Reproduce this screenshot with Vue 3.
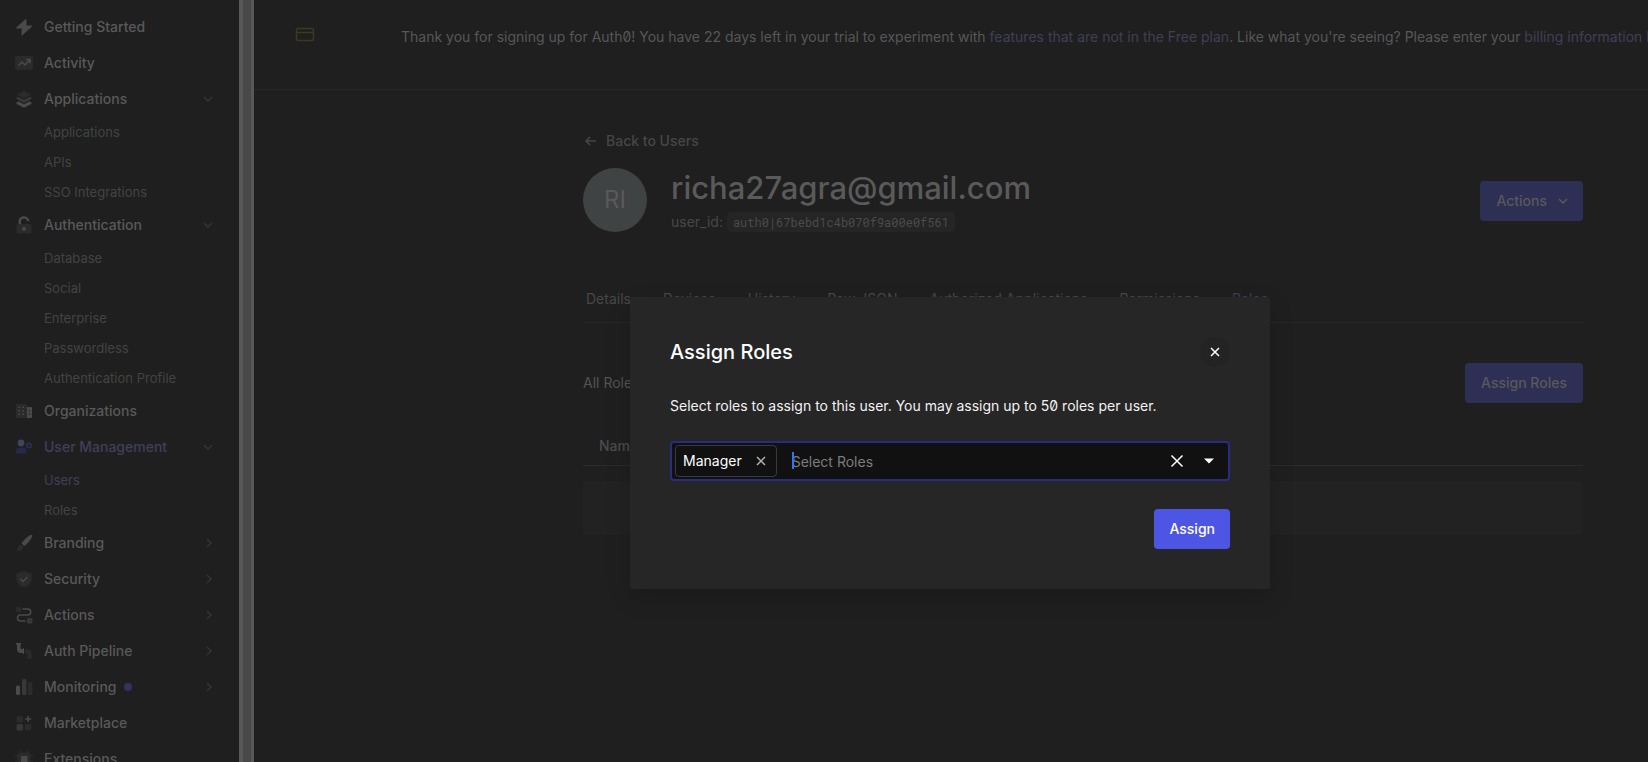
<script setup>
import { ref } from 'vue'

const nav = [
  { label: 'Getting Started', icon: 'bolt' },
  { label: 'Activity', icon: 'activity' },
  { label: 'Applications', icon: 'layers', open: true, children: [{ label: 'Applications' }, { label: 'APIs' }, { label: 'SSO Integrations' }] },
  { label: 'Authentication', icon: 'lock', open: true, children: [{ label: 'Database' }, { label: 'Social' }, { label: 'Enterprise' }, { label: 'Passwordless' }, { label: 'Authentication Profile' }] },
  { label: 'Organizations', icon: 'building' },
  { label: 'User Management', icon: 'users', open: true, active: true, children: [{ label: 'Users', active: true }, { label: 'Roles' }] },
  { label: 'Branding', icon: 'brush', closed: true },
  { label: 'Security', icon: 'shield', closed: true },
  { label: 'Actions', icon: 'flow', closed: true },
  { label: 'Auth Pipeline', icon: 'pipe', closed: true },
  { label: 'Monitoring', icon: 'bars', closed: true, dot: true },
  { label: 'Marketplace', icon: 'market' },
  { label: 'Extensions', icon: 'chip' }
]
const tabs = ['Details', 'Devices', 'History', 'Raw JSON', 'Authorized Applications', 'Permissions', 'Roles']
const query = ref('')
</script>

<template>
  <div class="shell">
    <nav class="sidebar" aria-label="Main">
      <template v-for="item in nav" :key="item.label">
        <a href="#" class="nav-row" :class="{ active: item.active }">
          <svg class="nav-icon" viewBox="0 0 18 18" width="18" height="18" aria-hidden="true">
            <path v-if="item.icon === 'bolt'" class="lt" d="M10.400 1.200 1.300 9.400c-.5.5-.3 1.200.4 1.200h5L6.400 16.900c0 .6.6.7 1 .3l9.300-8.400c.5-.5.3-1.200-.4-1.200h-4.800l-.100-6.100c0-.6-.6-.7-1-.3z" />
            <g v-else-if="item.icon === 'activity'">
              <rect class="dk" x="0" y="2" width="18" height="14" rx="1.500" />
              <path class="ln" d="M3.500 11.500 7 8l3 3 4.500-5M11 5.500h4v4" />
            </g>
            <g v-else-if="item.icon === 'layers'">
              <path class="dk" d="M9 1 1.500 4.500 9 8.200l7.500-3.700z" />
              <path class="md" d="m1.500 7.500 1.500-.7 6 3 6-3 1.500.7v1.500L9 13l-7.500-4z" />
              <path class="lt" d="m1.500 12.500 2-1.200L9 14.200l5.500-2.900 2 1.200V14L9 17.700 1.500 14z" />
            </g>
            <g v-else-if="item.icon === 'lock'">
              <rect class="dk" x="1.500" y="8" width="15" height="9.500" rx="1.500" />
              <path class="ln thick" d="M4.800 8V6a4.200 4.200 0 0 1 8.400-.800" />
              <circle class="lt" cx="9" cy="12.700" r="2" />
            </g>
            <g v-else-if="item.icon === 'building'">
              <rect class="dk" x="1" y="2" width="11" height="14" rx="1" />
              <path class="lt" d="M12 5h4q1 0 1 1v9q0 1-1 1h-4z" />
              <path class="lt" d="M3.500 4.500H5V6H3.500zm4 0H9V6H7.500zm-4 3.500H5v1.500H3.500zm4 0H9v1.500H7.500zm-4 3.500H5V13H3.500zm4 0H9V13H7.500z" />
              <path class="dk" d="M13.700 8h1.500v1.500h-1.500zm0 3.500h1.500V13h-1.500z" />
            </g>
            <g v-else-if="item.icon === 'users'">
              <circle class="u-lt" cx="6" cy="5" r="3.400" />
              <path class="u-dk" d="M1 15.500v-2Q1 9.800 5 9.800h3q3.500 0 3.500 3.700v2z" />
              <circle class="u-ring" cx="14" cy="7.500" r="2" />
              <path class="u-ring" d="M14 4.300v1m0 4.400v1m-3-4.800 1 .6m4 2.200 1 .6m-6 0 1-.6m4-2.200 1-.6" />
            </g>
            <g v-else-if="item.icon === 'brush'">
              <path class="lt" d="M17 1c.6.600.3 1.700-.5 2.900-2 3-5 6.700-7.300 8.100L6.500 9.300C8 7 12 3 14.500 1.500c1.200-.7 2-.9 2.500-.5z" />
              <path class="dk" d="M5.500 10.500q3 .5 2.800 3.200C7.500 17 3.500 17.300 1 17q1.800-1 1.800-3.300.2-2.700 2.700-3.200z" />
            </g>
            <g v-else-if="item.icon === 'shield'">
              <path class="dk" d="M9 .8q3.500 2.400 7.500 2.400v6Q16 14.500 9 17.500 2 14.500 1.500 9.200v-6Q5.500 3.200 9 .8z" />
              <path class="ln" d="m5.500 9 2.500 2.500 4.500-4.500" />
            </g>
            <g v-else-if="item.icon === 'flow'">
              <rect class="dk" x="1" y="1" width="5" height="5" rx="1" />
              <path class="ln" d="M7.500 3h5.200a3 3 0 0 1 0 6H5.500a3 3 0 0 0 0 6h5" />
              <rect class="md" x="12" y="12" width="5.500" height="5.500" rx="1" />
            </g>
            <g v-else-if="item.icon === 'pipe'">
              <path class="lt" d="M1 1h5v1.500h-.5V6q0 1 1 1H8V6h1v6H8v-1H6Q2 11 2 7V2.500H1z" />
              <path class="dk" d="M10 7.500h2.500q4 0 4 4V15h.5v1.500h-5V15h.500v-2.500q0-1-1-1H10z" />
            </g>
            <g v-else-if="item.icon === 'bars'">
              <rect class="lt" x="1" y="7.500" width="4" height="9.500" rx="1.500" />
              <rect class="md" x="7" y="1" width="4.500" height="16" rx="1.500" />
              <rect class="dk" x="13" y="4" width="4.500" height="13" rx="1.500" />
            </g>
            <g v-else-if="item.icon === 'market'">
              <rect class="dk" x="1.500" y="2" width="6.500" height="6.500" rx="1.500" />
              <rect class="md" x="1.500" y="10" width="6.500" height="6.500" rx="1.500" />
              <rect class="dk" x="10" y="10" width="6.500" height="6.500" rx="1.500" />
              <path class="ln" d="M13.200 2v6m-3-3h6" />
            </g>
            <g v-else>
              <path class="chip-pins" d="M6 0v18M12 0v18M0 6h18M0 12h18" />
              <rect class="dk" x="2.500" y="2.500" width="13" height="13" rx="2" />
              <rect class="lt" x="6" y="6" width="6.500" height="6.500" rx="1" />
            </g>
          </svg>
          <span>{{ item.label }}</span>
          <i v-if="item.dot" class="dot"></i>
          <svg v-if="item.open" class="chev" viewBox="0 0 12 12" width="12" height="12" aria-hidden="true"><path d="m2 4 4 4 4-4" /></svg>
          <svg v-if="item.closed" class="chev" viewBox="0 0 12 12" width="12" height="12" aria-hidden="true"><path d="m5 2 4 4-4 4" /></svg>
        </a>
        <a v-for="child in item.children" :key="child.label" href="#" class="sub-row" :class="{ active: child.active }">{{ child.label }}</a>
      </template>
    </nav>
    <div class="gutter"></div>

    <main class="main">
      <div class="page">
        <div class="banner">
          <svg viewBox="0 0 20 16" width="20" height="16" aria-hidden="true"><rect x="1.500" y="1.500" width="17" height="12" rx="1.500" /><path d="M1.500 5.500h17" /></svg>
          <p>Thank you for signing up for Auth0! You have 22 days left in your trial to experiment with <a href="#">features that are not in the Free plan</a>. Like what you're seeing? Please enter your <a href="#">billing information here</a></p>
        </div>

        <div class="content">
          <a href="#" class="back">
            <svg viewBox="0 0 16 16" width="16" height="16" aria-hidden="true"><path d="M13 8H3m4-4L3 8l4 4" /></svg>
            Back to Users
          </a>
          <header class="profile">
            <div class="avatar">RI</div>
            <div class="identity">
              <h1>richa27agra@gmail.com</h1>
              <p>user_id: <code>auth0|67bebd1c4b070f9a00e0f561</code></p>
            </div>
            <button class="btn muted menu" type="button">Actions
              <svg viewBox="0 0 12 12" width="12" height="12" aria-hidden="true"><path d="m2 4 4 4 4-4" /></svg>
            </button>
          </header>
          <div class="tabs">
            <a v-for="t in tabs" :key="t" href="#" :class="{ active: t === 'Roles' }">{{ t }}</a>
          </div>
          <div class="roles-bar">
            <p>All Roles assigned to this User.</p>
            <button class="btn muted" type="button">Assign Roles</button>
          </div>
          <table class="roles">
            <thead><tr><th>Name</th><th>Description</th></tr></thead>
          </table>
          <div class="empty"></div>
        </div>
      </div>

      <div class="overlay">
        <section class="modal" role="dialog" aria-modal="true" aria-labelledby="dlg-title">
          <header>
            <h2 id="dlg-title">Assign Roles</h2>
            <button class="close" type="button" aria-label="Close">
              <svg viewBox="0 0 12 12" width="12" height="12" aria-hidden="true"><path d="m2 2 8 8m0-8-8 8" /></svg>
            </button>
          </header>
          <label for="roles-input">Select roles to assign to this user. You may assign up to 50 roles per user.</label>
          <div class="picker">
            <span class="tag">Manager
              <button type="button" aria-label="Remove Manager"><svg viewBox="0 0 12 12" width="12" height="12" aria-hidden="true"><path d="m2 2 8 8m0-8-8 8" /></svg></button>
            </span>
            <span class="field"><input id="roles-input" v-model="query" type="text" placeholder="Select Roles" /></span>
            <button class="clear" type="button" aria-label="Clear all"><svg viewBox="0 0 14 14" width="14" height="14" aria-hidden="true"><path d="m1.500 1.500 11 11m0-11-11 11" /></svg></button>
            <button class="toggle" type="button" aria-label="Show roles"><svg viewBox="0 0 10 6" width="10" height="6" aria-hidden="true"><path d="M0 .5h10l-5 5z" /></svg></button>
          </div>
          <footer><button class="btn primary" type="button">Assign</button></footer>
        </section>
      </div>
    </main>
  </div>
</template>

<style>
html, body { background: #1f1f1f; }
</style>

<style scoped>
.shell {
  display: flex;
  height: 100vh;
  overflow: hidden;
  background: #1f1f1f;
  color: #535353;
  font-family: Inter, "Liberation Sans", sans-serif;
  font-feature-settings: "zero";
  font-size: 14px;
  line-height: 20px;
}
.shell * { box-sizing: border-box; }
a { color: inherit; text-decoration: none; }
p, h1, h2 { margin: 0; }
button { font: inherit; color: inherit; border: 0; padding: 0; background: none; cursor: pointer; }
svg { display: block; flex: none; }

.sidebar { flex: 0 0 239px; padding: 9px 25px 0 15px; overflow: hidden; }
.nav-row { display: flex; align-items: center; height: 36px; font-weight: 500; color: #595959; white-space: nowrap; }
.nav-icon { margin-right: 11px; }
.nav-row.active, .sub-row.active { color: #3f3f57; }
.chev { margin-left: auto; fill: none; stroke: #363636; stroke-width: 1.300; }
.sub-row { display: flex; align-items: center; height: 30px; padding-left: 29px; font-size: 13px; color: #434343; white-space: nowrap; }
.dot { width: 8px; height: 8px; margin-left: 8px; border-radius: 50%; background: #313361; }
.lt { fill: #4a4a4a; }
.md { fill: #383838; }
.dk { fill: #2b2b2b; }
.ln { fill: none; stroke: #4a4a4a; stroke-width: 1.500; }
.ln.thick { stroke-width: 2.500; }
.chip-pins { fill: none; stroke: #2b2b2b; stroke-width: 1.500; }
.u-lt { fill: #42425f; }
.u-dk { fill: #27284a; }
.u-ring { fill: none; stroke: #2d2e55; stroke-width: 1.500; }

.gutter { flex: 0 0 15px; background: #494949; border: solid #585858; border-width: 0 3px 0 4px; }

.main { position: relative; flex: 1; min-width: 0; overflow: hidden; }
/* the banner keeps its text on one line, so the page is wider than its viewport */
.page { min-width: 1658px; }
.banner { display: flex; align-items: flex-start; gap: 86px; padding: 27px 41px 42px; border-bottom: 1px solid #282828; white-space: nowrap; color: #575757; }
.banner svg { fill: none; stroke: #3e3722; stroke-width: 1.500; }
.banner a { color: #3f3f57; }

.content { max-width: 1000px; margin: 0 auto; padding-top: 41px; }
.back { display: inline-flex; align-items: center; gap: 7px; font-weight: 500; color: #464646; height: 20px; vertical-align: top; }
.back svg, .btn svg { fill: none; stroke: currentColor; stroke-width: 1.500; }
.profile { display: flex; align-items: center; margin-top: 17px; }
.avatar { display: grid; place-items: center; width: 64px; height: 64px; margin-right: 24px; border-radius: 50%; background: #3f4343; color: #595959; font-size: 24px; }
.identity { flex: 1; }
h1 { font-size: 31px; line-height: 40px; font-weight: 500; color: #5a5a5a; }
.identity p { margin-top: 4px; color: #484848; }
code { display: inline-block; padding: 0 6px; border-radius: 4px; background: #252525; color: #4b4b4b; font: 12px/20px "Roboto Mono", "DejaVu Sans Mono", monospace; vertical-align: top; }
.btn { display: inline-flex; align-items: center; gap: 12px; height: 40px; padding: 0 16px; border-radius: 4px; font-weight: 500; }
.btn.menu { gap: 10px; padding: 0 14px 0 16px; margin-top: 2px; }
.btn.muted { background: #2e2f55; color: #595959; }
.btn.primary { background: #4c55e4; color: #fff; padding: 0 15px; }

.tabs { display: flex; gap: 32px; margin-top: 57px; padding: 0 3px 13px; border-bottom: 1px solid #272727; color: #484848; }
.tabs .active { color: #3f3f57; }
.roles-bar { display: flex; align-items: center; justify-content: space-between; margin-top: 40px; }
.roles { width: 100%; margin-top: 20px; border-collapse: collapse; table-layout: fixed; }
.roles th { height: 42px; padding: 4px 16px 0; border-bottom: 1px solid #2a2a2a; text-align: left; font-weight: 500; color: #4b4b4b; }
.empty { height: 54px; margin-top: 15px; border-radius: 4px; background: #222; }

.overlay { position: absolute; inset: 0; display: flex; justify-content: center; align-items: flex-start; padding: 297px 2px 0 0; }
.modal { width: 640px; max-width: 100%; padding: 40px; border-radius: 3px; background: #262626; color: #fff; box-shadow: 0 8px 24px rgba(0, 0, 0, 0.16); }
.modal header { display: flex; align-items: center; justify-content: space-between; }
h2 { font-size: 20px; line-height: 30px; font-weight: 500; }
.close { display: grid; place-items: center; width: 30px; height: 30px; border-radius: 50%; background: #232323; }
.close svg, .tag svg, .clear svg { fill: none; stroke: currentColor; stroke-width: 1.500; }
.modal label { display: block; margin: 29px 0 25px; color: #f2f2f2; }
.picker { display: flex; align-items: center; height: 40px; padding: 0 14px 0 3px; border: 2px solid #282c82; border-radius: 4px; background: #111; }
.tag { display: flex; align-items: center; gap: 13px; height: 32px; padding: 0 9px 0 7px; border: 1px solid #3a3a3a; border-radius: 4px; }
.tag button { color: #b0b0b0; }
.field { position: relative; flex: 1; margin-left: 15px; padding-top: 2px; }
.field::before { content: ""; position: absolute; left: 0; top: 2px; width: 2px; height: 17px; background: #2f74f5; }
.field input { display: block; width: 100%; padding: 0; border: 0; outline: 0; background: none; color: #fff; font: inherit; }
.field input::placeholder { color: #7c7c7c; opacity: 1; }
.clear { margin-right: 20px; }
.toggle svg { fill: currentColor; }
.modal footer { display: flex; justify-content: flex-end; margin-top: 28px; }
</style>
